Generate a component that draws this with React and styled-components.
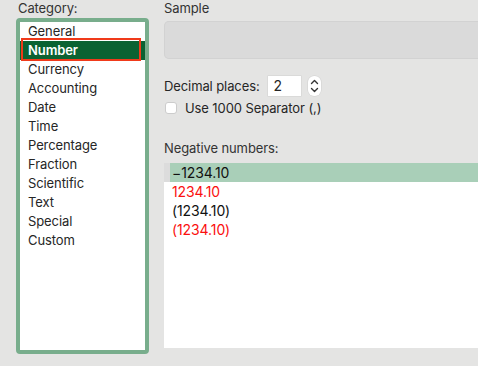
import React from 'react';
import styled, { createGlobalStyle } from 'styled-components';

const GlobalStyle = createGlobalStyle`
html, body {
    margin: 0;
    padding: 0;
    background: #e4e4e3;
    overflow: hidden;
}
body {
    font-family: Inter, "Liberation Sans", sans-serif;
    font-size: 13px;
    letter-spacing: -0.1px;
    color: #262626;
}
`;

const StyledPage = styled.div`
display: flex;
align-items: flex-start;
width: 478px;
height: 366px;
padding-left: 16px;
box-sizing: border-box;
`;

const StyledLeft = styled.div`
width: 133px;
flex-shrink: 0;
`;

const StyledRight = styled.div`
flex: 1;
margin-left: 15px;
margin-right: -20px;
`;

const StyledLabel = styled.div`
height: 16px;
line-height: 16px;
margin-top: ${(p) => p.top || 0}px;
margin-bottom: ${(p) => p.gap || 0}px;
padding-left: ${(p) => p.indent || 0}px;
color: #333;
`;

const StyledCategoryBox = styled.div`
box-sizing: border-box;
height: 336px;
border: 4px solid #78ad8c;
border-radius: 4px;
background: #ffffff;
`;

const StyledCategoryItem = styled.div`
position: relative;
height: 19px;
line-height: 19px;
padding-left: 8px;
background: ${(p) => (p.selected ? '#0b6232' : 'transparent')};
color: ${(p) => (p.selected ? '#ffffff' : '#262626')};
font-weight: ${(p) => (p.selected ? 600 : 400)};
`;

const StyledHighlight = styled.div`
position: absolute;
left: 1px;
top: -3px;
width: 120px;
height: 23px;
box-sizing: border-box;
border: 2px solid #f03a1a;
pointer-events: none;
`;

const StyledSample = styled.div`
height: 38px;
margin-top: 5px;
background: #dadada;
border-radius: 5px;
box-shadow: inset 0 0 0 1px #d2d2d2;
`;

const StyledRow = styled.div`
display: flex;
align-items: center;
margin-top: ${(p) => p.top || 0}px;
height: ${(p) => p.h || 20}px;
`;

const StyledInput = styled.div`
box-sizing: border-box;
width: 33px;
height: 20px;
margin-left: 8px;
padding-left: 6px;
line-height: 20px;
background: #ffffff;
box-shadow: 0 0 0 0.5px #cfcfcf;
font-size: 14px;
`;

const StyledStepper = styled.div`
width: 13px;
height: 20px;
margin-left: 7px;
border-radius: 6px;
background: #ffffff;
box-shadow: 0 0 0 0.5px #cfcfcf;
display: flex;
align-items: center;
justify-content: center;
`;

const StyledCheckbox = styled.div`
box-sizing: border-box;
width: 12px;
height: 12px;
margin-left: 1px;
margin-right: 8px;
border-radius: 3px;
background: #ffffff;
border: 1px solid #cccccc;
`;

const StyledNegativeBox = styled.div`
height: 185px;
background: #ffffff;
`;

const StyledNegativeItem = styled.div`
height: 19px;
line-height: 19px;
padding-left: ${(p) => (p.selected ? 2 : 8)}px;
border-left: ${(p) => (p.selected ? '6px solid #dcdcdc' : 'none')};
background: ${(p) => (p.selected ? '#a9cfb8' : 'transparent')};
color: ${(p) => (p.red ? '#fb0f0f' : '#111111')};
font-size: 14px;
`;

const categories = [
    'General', 'Number', 'Currency', 'Accounting', 'Date', 'Time',
    'Percentage', 'Fraction', 'Scientific', 'Text', 'Special', 'Custom',
];

const negatives = [
    { text: '\u22121234.10', red: false },
    { text: '1234.10', red: true },
    { text: '(1234.10)', red: false },
    { text: '(1234.10)', red: true },
];

const Stepper = () => (
    <StyledStepper>
        <svg width="9" height="16" viewBox="0 0 9 16">
            <path d="M1.5 5.5 L4.5 2.5 L7.5 5.5" fill="none" stroke="#333" strokeWidth="1.4" strokeLinecap="round" strokeLinejoin="round" />
            <path d="M1.5 10.5 L4.5 13.5 L7.5 10.5" fill="none" stroke="#333" strokeWidth="1.4" strokeLinecap="round" strokeLinejoin="round" />
        </svg>
    </StyledStepper>
);

export default function App() {
    return (
        <>
            <GlobalStyle />
            <StyledPage>
                <StyledLeft>
                    <StyledLabel gap={2} indent={2}>Category:</StyledLabel>
                    <StyledCategoryBox>
                        {categories.map((c) => (
                            <StyledCategoryItem key={c} selected={c === 'Number'}>
                                {c}
                                {c === 'Number' && <StyledHighlight />}
                            </StyledCategoryItem>
                        ))}
                    </StyledCategoryBox>
                </StyledLeft>
                <StyledRight>
                    <StyledLabel>Sample</StyledLabel>
                    <StyledSample />
                    <StyledRow top={17}>
                        Decimal places:
                        <StyledInput>2</StyledInput>
                        <Stepper />
                    </StyledRow>
                    <StyledRow top={2} h={20}>
                        <StyledCheckbox />
                        Use 1000 Separator (,)
                    </StyledRow>
                    <StyledLabel top={22} gap={7}>Negative numbers:</StyledLabel>
                    <StyledNegativeBox>
                        {negatives.map((n, i) => (
                            <StyledNegativeItem key={i} selected={i === 0} red={n.red}>
                                {n.text}
                            </StyledNegativeItem>
                        ))}
                    </StyledNegativeBox>
                </StyledRight>
            </StyledPage>
        </>
    );
}
